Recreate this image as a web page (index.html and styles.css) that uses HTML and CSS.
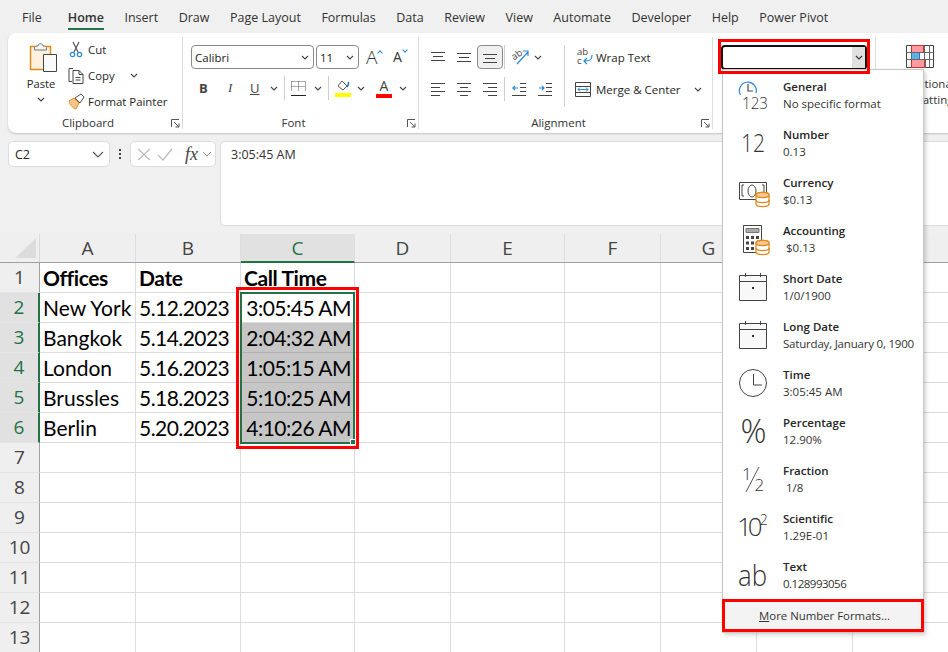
FILE: index.html
```html
<!DOCTYPE html>
<html lang="en">
<head>
<meta charset="utf-8">
<title>Excel number format menu</title>
<link rel="stylesheet" href="styles.css">
</head>
<body>
<div class="app">
  <nav class="tabs">
    <span>File</span><span class="tab-on">Home</span><span>Insert</span><span>Draw</span><span>Page Layout</span><span>Formulas</span><span>Data</span><span>Review</span><span>View</span><span>Automate</span><span>Developer</span><span>Help</span><span>Power Pivot</span>
  </nav>

  <section class="ribbon">
    <div class="group g-clip">
      <div class="group-body clip-body">
        <div class="paste">
          <svg width="34" height="31" viewBox="0 0 34 31"><path d="M6.500 4.500h20v23h-20z" fill="#fdf0dc" stroke="#e08a1e" stroke-width="1.500"/><path d="M10.500 8V5.500c0-1 2-1.500 3.500-1.500 0-3 5-3 5 0 1.500 0 3.500.5 3.500 1.500V8z" fill="#f4f4f4" stroke="#777"/><path d="M19.500 12.500h13v17h-13z" fill="#fafafa" stroke="#444"/></svg>
          <span class="paste-label">Paste</span>
          <svg class="chev" width="8" height="5" viewBox="0 0 8 5"><path d="M1 1l3 3 3-3" fill="none" stroke="#444" stroke-width="1.100"/></svg>
        </div>
        <div class="clip-list">
          <div class="clip-row"><svg width="16" height="17" viewBox="0 0 16 17"><path d="M5 1l5 10M11 1L6 11" stroke="#555" stroke-width="1.200" fill="none"/><circle cx="4.500" cy="13.500" r="2.200" fill="none" stroke="#2b88d8" stroke-width="1.200"/><circle cx="11.500" cy="13.500" r="2.200" fill="none" stroke="#2b88d8" stroke-width="1.200"/></svg><span>Cut</span></div>
          <div class="clip-row"><svg width="16" height="17" viewBox="0 0 16 17"><path d="M5 1.500H1v13h3M5 3.500h6l4 4v9H5z M11 3.500v4h4" fill="#fff" stroke="#444"/><path d="M7.500 10.500h5M7.500 13h5" stroke="#444"/></svg><span>Copy</span><svg class="clip-chev" width="8" height="5" viewBox="0 0 8 5"><path d="M1 1l3 3 3-3" fill="none" stroke="#444" stroke-width="1.100"/></svg></div>
          <div class="clip-row"><svg width="16" height="17" viewBox="0 0 16 17"><path d="M1 8l5-3 5 5-3 6c-2 0-6-4-7-8z" fill="#f7c48a" stroke="#e08a1e"/><path d="M7 5l6-4 3 3-4 6z" fill="#fff" stroke="#555"/></svg><span>Format Painter</span></div>
        </div>
      </div>
      <div class="group-foot"><span>Clipboard</span><svg class="launch" width="9" height="9" viewBox="0 0 9 9"><path d="M.5 8V.5H8M3 3l5 5M8 4.500V8H4.500" fill="none" stroke="#555"/></svg></div>
    </div>

    <div class="group g-font">
      <div class="group-body font-body">
        <div class="row font-top">
          <div class="combo font-name"><span>Calibri</span><svg width="8" height="5" viewBox="0 0 8 5"><path d="M1 1l3 3 3-3" fill="none" stroke="#444" stroke-width="1.100"/></svg></div>
          <div class="combo font-size"><span>11</span><svg width="8" height="5" viewBox="0 0 8 5"><path d="M1 1l3 3 3-3" fill="none" stroke="#444" stroke-width="1.100"/></svg></div>
          <span class="grow">A<i class="caret up"></i></span>
          <span class="grow small">A<i class="caret down"></i></span>
        </div>
        <div class="row font-bottom">
          <b class="fmt f-b">B</b><i class="fmt f-i">I</i><u class="fmt f-u">U</u>
          <svg width="8" height="5" viewBox="0 0 8 5"><path d="M1 1l3 3 3-3" fill="none" stroke="#444" stroke-width="1.100"/></svg>
          <span class="vsep vs-font"></span>
          <svg class="border-ico" width="15" height="15" viewBox="0 0 15 15"><path d="M.5.500h14M.5.500v10M14.500.500v10M.5 5.500h14M7.500.500v10" fill="none" stroke="#555" stroke-dasharray="1 1"/><path d="M0 14.500h15" stroke="#222"/></svg>
          <svg width="8" height="5" viewBox="0 0 8 5"><path d="M1 1l3 3 3-3" fill="none" stroke="#444" stroke-width="1.100"/></svg>
          <span class="vsep vs-font"></span>
          <svg class="fill-ico" width="16" height="17" viewBox="0 0 16 17"><path d="M7 1l5 5-4 4-5-4z" fill="#fff" stroke="#555"/><path d="M12 7c2-3 2-4 1-5" fill="none" stroke="#1b6ec2" stroke-width="1.500"/><path d="M0 13h16v4H0z" fill="#ffff00"/></svg>
          <svg width="8" height="5" viewBox="0 0 8 5"><path d="M1 1l3 3 3-3" fill="none" stroke="#444" stroke-width="1.100"/></svg>
          <span class="color-a">A</span>
          <svg width="8" height="5" viewBox="0 0 8 5"><path d="M1 1l3 3 3-3" fill="none" stroke="#444" stroke-width="1.100"/></svg>
        </div>
      </div>
      <div class="group-foot"><span>Font</span><svg class="launch" width="9" height="9" viewBox="0 0 9 9"><path d="M.5 8V.5H8M3 3l5 5M8 4.500V8H4.500" fill="none" stroke="#555"/></svg></div>
    </div>

    <div class="group g-align">
      <div class="group-body align-body">
        <div class="align-grid">
          <div class="row align-row">
            <span class="tile"><svg width="14" height="13" viewBox="0 0 14 13"><path d="M0 1.500h14M2 5.500h10M0 9.500h14" stroke="#444"/></svg></span>
            <span class="tile"><svg width="14" height="13" viewBox="0 0 14 13"><path d="M0 2.500h14M2 6.500h10M0 10.500h14" stroke="#444"/></svg></span>
            <span class="tile tile-on"><svg width="14" height="13" viewBox="0 0 14 13"><path d="M0 3.500h14M2 7.500h10M0 11.500h14" stroke="#444"/></svg></span>
            <span class="vsep vs-align"></span>
            <span class="orient"><svg width="18" height="17" viewBox="0 0 18 17"><text x="0" y="9" class="svg-ab" transform="rotate(-35 5 7)">ab</text><path d="M5 15L16 3M11 2h5v5" fill="none" stroke="#2b88d8" stroke-width="1.200"/></svg><svg width="8" height="5" viewBox="0 0 8 5"><path d="M1 1l3 3 3-3" fill="none" stroke="#444" stroke-width="1.100"/></svg></span>
          </div>
          <div class="row align-row">
            <span class="tile"><svg width="14" height="13" viewBox="0 0 14 13"><path d="M0 .5h14M0 4.500h9M0 8.500h14M0 12.500h9" stroke="#444"/></svg></span>
            <span class="tile"><svg width="14" height="13" viewBox="0 0 14 13"><path d="M0 .5h14M3 4.500h8M0 8.500h14M3 12.500h8" stroke="#444"/></svg></span>
            <span class="tile"><svg width="14" height="13" viewBox="0 0 14 13"><path d="M0 .5h14M5 4.500h9M0 8.500h14M5 12.500h9" stroke="#444"/></svg></span>
            <span class="vsep vs-align"></span>
            <span class="tile"><svg width="14" height="13" viewBox="0 0 14 13"><path d="M8 .5h6M8 4.500h6M8 8.500h6M0 12.500h14" stroke="#444"/><path d="M6 5H1M3 3L1 5l2 2" stroke="#2b88d8" fill="none" stroke-width="1.200"/></svg></span>
            <span class="tile"><svg width="14" height="13" viewBox="0 0 14 13"><path d="M8 .5h6M8 4.500h6M8 8.500h6M0 12.500h14" stroke="#444"/><path d="M1 5h5M4 3l2 2-2 2" stroke="#2b88d8" fill="none" stroke-width="1.200"/></svg></span>
          </div>
        </div>
        <span class="vsep vs-align-tall"></span>
        <div class="wrap-col">
          <div class="row wrap-row wrap-first"><svg width="16" height="16" viewBox="0 0 16 16"><text x="0" y="6" class="svg-ab">ab</text><text x="0" y="15" class="svg-ab">c</text><path d="M15 6c0 5-2 6-8 6M10 9l-3 3 3 3" fill="none" stroke="#2b88d8" stroke-width="1.200"/></svg><span>Wrap Text</span></div>
          <div class="row wrap-row wrap-second"><svg width="16" height="15" viewBox="0 0 16 15"><path d="M.5.500h15v14H.5zM.5 4.500h15M.5 10.500h15" fill="#fff" stroke="#444"/><path d="M3 7.500h10M5 5.500l-2 2 2 2M11 5.500l2 2-2 2" fill="none" stroke="#2b88d8"/></svg><span>Merge &amp; Center</span><svg class="merge-chev" width="8" height="5" viewBox="0 0 8 5"><path d="M1 1l3 3 3-3" fill="none" stroke="#444" stroke-width="1.100"/></svg></div>
        </div>
      </div>
      <div class="group-foot"><span>Alignment</span><svg class="launch" width="9" height="9" viewBox="0 0 9 9"><path d="M.5 8V.5H8M3 3l5 5M8 4.500V8H4.500" fill="none" stroke="#555"/></svg></div>
    </div>

    <div class="group g-num">
      <div class="num-combo"><span class="num-drop"><svg width="8" height="5" viewBox="0 0 8 5"><path d="M1 1l3 3 3-3" fill="none" stroke="#333" stroke-width="1.100"/></svg></span></div>
    </div>

    <div class="g-styles">
      <svg width="28" height="23" viewBox="0 0 28 23"><path d="M.5.500h27v22H.5z" fill="#fff" stroke="#444"/><path d="M5.500.500h12v7h-12z" fill="#ff9aa2" stroke="#c33"/><path d="M5.500 7.500h8v7h-8z" fill="#64aee8" stroke="#2b78c2"/><path d="M5.500 14.500h14v8h-14z" fill="#ff9aa2" stroke="#c33"/><path d="M.5 7.500h27M.5 14.500h27M18.500.500v22M23.500.500v22" fill="none" stroke="#666"/></svg>
      <span class="styles-label">Conditional<br>Formatting</span>
    </div>
  </section>

  <section class="formula">
    <div class="name-box"><span>C2</span><svg width="12" height="7" viewBox="0 0 12 7"><path d="M1 1l5 5 5-5" fill="none" stroke="#555" stroke-width="1.200"/></svg></div>
    <div class="dots"><i></i><i></i><i></i></div>
    <div class="fx-box">
      <svg width="14" height="13" viewBox="0 0 14 13"><path d="M1 1l12 11M13 1L1 12" stroke="#bbb" stroke-width="1.200"/></svg>
      <svg width="16" height="13" viewBox="0 0 16 13"><path d="M1 7l5 5 9-11" fill="none" stroke="#bbb" stroke-width="1.200"/></svg>
      <span class="fx">fx</span>
      <svg width="10" height="6" viewBox="0 0 10 6"><path d="M1 1l4 4 4-4" fill="none" stroke="#999"/></svg>
    </div>
    <div class="formula-input">3:05:45 AM</div>
  </section>

  <section class="sheet">
    <div class="sheet-row head-row">
      <div class="corner"><span class="corner-tri"></span></div>
      <div class="ch w-a">A</div><div class="ch w-b">B</div><div class="ch ch-on w-c">C</div><div class="ch w-a">D</div><div class="ch w-c">E</div><div class="ch w-a">F</div><div class="ch w-a">G</div><div class="ch w-a"></div><div class="ch w-a"></div>
    </div>
    <div class="sheet-row">
      <div class="rh">1</div><div class="cell w-a bold">Offices</div><div class="cell w-b bold">Date</div><div class="cell w-c bold">Call Time</div><div class="cell w-a"></div><div class="cell w-c"></div><div class="cell w-a"></div><div class="cell w-a"></div><div class="cell w-a"></div><div class="cell w-a"></div>
    </div>
    <div class="sheet-row">
      <div class="rh rh-on">2</div><div class="cell w-a">New York</div><div class="cell w-b date">5.12.2023</div><div class="cell w-c time">3:05:45 AM</div><div class="cell w-a"></div><div class="cell w-c"></div><div class="cell w-a"></div><div class="cell w-a"></div><div class="cell w-a"></div><div class="cell w-a"></div>
    </div>
    <div class="sheet-row">
      <div class="rh rh-on">3</div><div class="cell w-a">Bangkok</div><div class="cell w-b date">5.14.2023</div><div class="cell w-c time sel">2:04:32 AM</div><div class="cell w-a"></div><div class="cell w-c"></div><div class="cell w-a"></div><div class="cell w-a"></div><div class="cell w-a"></div><div class="cell w-a"></div>
    </div>
    <div class="sheet-row">
      <div class="rh rh-on">4</div><div class="cell w-a">London</div><div class="cell w-b date">5.16.2023</div><div class="cell w-c time sel">1:05:15 AM</div><div class="cell w-a"></div><div class="cell w-c"></div><div class="cell w-a"></div><div class="cell w-a"></div><div class="cell w-a"></div><div class="cell w-a"></div>
    </div>
    <div class="sheet-row">
      <div class="rh rh-on">5</div><div class="cell w-a">Brussles</div><div class="cell w-b date">5.18.2023</div><div class="cell w-c time sel">5:10:25 AM</div><div class="cell w-a"></div><div class="cell w-c"></div><div class="cell w-a"></div><div class="cell w-a"></div><div class="cell w-a"></div><div class="cell w-a"></div>
    </div>
    <div class="sheet-row">
      <div class="rh rh-on">6</div><div class="cell w-a">Berlin</div><div class="cell w-b date">5.20.2023</div><div class="cell w-c time sel">4:10:26 AM</div><div class="cell w-a"></div><div class="cell w-c"></div><div class="cell w-a"></div><div class="cell w-a"></div><div class="cell w-a"></div><div class="cell w-a"></div>
    </div>
    <div class="sheet-row"><div class="rh">7</div><div class="cell w-a"></div><div class="cell w-b"></div><div class="cell w-c"></div><div class="cell w-a"></div><div class="cell w-c"></div><div class="cell w-a"></div><div class="cell w-a"></div><div class="cell w-a"></div><div class="cell w-a"></div></div>
    <div class="sheet-row"><div class="rh">8</div><div class="cell w-a"></div><div class="cell w-b"></div><div class="cell w-c"></div><div class="cell w-a"></div><div class="cell w-c"></div><div class="cell w-a"></div><div class="cell w-a"></div><div class="cell w-a"></div><div class="cell w-a"></div></div>
    <div class="sheet-row"><div class="rh">9</div><div class="cell w-a"></div><div class="cell w-b"></div><div class="cell w-c"></div><div class="cell w-a"></div><div class="cell w-c"></div><div class="cell w-a"></div><div class="cell w-a"></div><div class="cell w-a"></div><div class="cell w-a"></div></div>
    <div class="sheet-row"><div class="rh">10</div><div class="cell w-a"></div><div class="cell w-b"></div><div class="cell w-c"></div><div class="cell w-a"></div><div class="cell w-c"></div><div class="cell w-a"></div><div class="cell w-a"></div><div class="cell w-a"></div><div class="cell w-a"></div></div>
    <div class="sheet-row"><div class="rh">11</div><div class="cell w-a"></div><div class="cell w-b"></div><div class="cell w-c"></div><div class="cell w-a"></div><div class="cell w-c"></div><div class="cell w-a"></div><div class="cell w-a"></div><div class="cell w-a"></div><div class="cell w-a"></div></div>
    <div class="sheet-row"><div class="rh">12</div><div class="cell w-a"></div><div class="cell w-b"></div><div class="cell w-c"></div><div class="cell w-a"></div><div class="cell w-c"></div><div class="cell w-a"></div><div class="cell w-a"></div><div class="cell w-a"></div><div class="cell w-a"></div></div>
    <div class="sheet-row"><div class="rh">13</div><div class="cell w-a"></div><div class="cell w-b"></div><div class="cell w-c"></div><div class="cell w-a"></div><div class="cell w-c"></div><div class="cell w-a"></div><div class="cell w-a"></div><div class="cell w-a"></div><div class="cell w-a"></div></div>
  </section>

  <div class="sel-green"><span class="handle"></span></div>
  <div class="mark mark-cells"></div>
  <div class="mark mark-combo"></div>

  <aside class="menu">
    <div class="item">
      <svg class="ico" width="32" height="32" viewBox="0 0 32 32"><path d="M3.500 16A8.500 8.500 0 1 1 19 14" fill="none" stroke="#2b88d8" stroke-width="1.200"/><path d="M11 5v7h5" fill="none" stroke="#444" stroke-width="1.200"/><text x="5" y="30" class="g g-17" textLength="26" lengthAdjust="spacingAndGlyphs">123</text></svg>
      <div class="txt"><strong>General</strong><span>No specific format</span></div>
    </div>
    <div class="item">
      <svg class="ico" width="32" height="32" viewBox="0 0 32 32"><text x="4" y="25" class="g g-26" textLength="24" lengthAdjust="spacingAndGlyphs">12</text></svg>
      <div class="txt"><strong>Number</strong><span>0.13</span></div>
    </div>
    <div class="item">
      <svg class="ico" width="32" height="32" viewBox="0 0 32 32"><path d="M2.500 7.500h27v17h-27z" fill="#fff" stroke="#444"/><path d="M7 10H5v11h2M25 10h2v11h-2" fill="none" stroke="#444"/><ellipse cx="15" cy="16" rx="4" ry="6" fill="none" stroke="#444"/><path d="M19 20c0-3.500 13-3.500 13 0v9c0 3.500-13 3.500-13 0z" fill="#fff" stroke="#e08a1e" stroke-width="1.300"/><path d="M19 20c0 3.500 13 3.500 13 0s-13-3.500-13 0z" fill="#f9c98c" stroke="#e08a1e" stroke-width="1.300"/><path d="M19 25c0 3.500 13 3.500 13 0" fill="none" stroke="#e08a1e" stroke-width="1.300"/></svg>
      <div class="txt"><strong>Currency</strong><span>$0.13</span></div>
    </div>
    <div class="item">
      <svg class="ico" width="32" height="32" viewBox="0 0 32 32"><path d="M6.500 2.500h18v27h-18z" fill="#fff" stroke="#444"/><path d="M9 5.500h13v4H9z" fill="#aaa" stroke="#777"/><path d="M9 13h3v3H9zM14 13h3v3h-3zM19 13h3v3h-3zM9 18.500h3v3H9zM14 18.500h3v3h-3zM9 24h3v3H9zM14 24h3v3h-3z" fill="#444"/><path d="M19 20c0-3.500 13-3.500 13 0v9c0 3.500-13 3.500-13 0z" fill="#fff" stroke="#e08a1e" stroke-width="1.300"/><path d="M19 20c0 3.500 13 3.500 13 0s-13-3.500-13 0z" fill="#f9c98c" stroke="#e08a1e" stroke-width="1.300"/><path d="M19 25c0 3.500 13 3.500 13 0" fill="none" stroke="#e08a1e" stroke-width="1.300"/></svg>
      <div class="txt"><strong>Accounting</strong><span class="ind">$0.13</span></div>
    </div>
    <div class="item">
      <svg class="ico" width="32" height="32" viewBox="0 0 32 32"><path d="M2.500 4.500h27v25h-27z" fill="#f8f8f8" stroke="#444"/><path d="M2.500 10.500h27M8.500 2v4M23.500 2v4" stroke="#444"/><path d="M15 16h2v2h-2z" fill="#333"/></svg>
      <div class="txt"><strong>Short Date</strong><span>1/0/1900</span></div>
    </div>
    <div class="item">
      <svg class="ico" width="32" height="32" viewBox="0 0 32 32"><path d="M2.500 4.500h27v25h-27z" fill="#f8f8f8" stroke="#444"/><path d="M2.500 10.500h27M8.500 2v4M23.500 2v4" stroke="#444"/><path d="M15 16h2v2h-2z" fill="#333"/></svg>
      <div class="txt"><strong>Long Date</strong><span class="tight-s">Saturday, January 0, 1900</span></div>
    </div>
    <div class="item">
      <svg class="ico" width="32" height="32" viewBox="0 0 32 32"><circle cx="16" cy="16" r="13.500" fill="#fff" stroke="#444"/><path d="M16.500 7v11H25" fill="none" stroke="#444"/></svg>
      <div class="txt"><strong>Time</strong><span>3:05:45 AM</span></div>
    </div>
    <div class="item">
      <svg class="ico" width="32" height="32" viewBox="0 0 32 32"><text x="3.500" y="28" class="g g-33" textLength="26" lengthAdjust="spacingAndGlyphs">%</text></svg>
      <div class="txt"><strong>Percentage</strong><span>12.90%</span></div>
    </div>
    <div class="item">
      <svg class="ico" width="32" height="32" viewBox="0 0 32 32"><text x="5" y="17" class="g g-17">1</text><path d="M9 29L22 4" stroke="#555"/><text x="17.500" y="28" class="g g-17">2</text></svg>
      <div class="txt"><strong>Fraction</strong><span class="ind">1/8</span></div>
    </div>
    <div class="item">
      <svg class="ico" width="32" height="32" viewBox="0 0 32 32"><text x="0" y="25" class="g g-26 sci">10<tspan class="g-14" dx="1" dy="-11">2</tspan></text></svg>
      <div class="txt"><strong>Scientific</strong><span>1.29E-01</span></div>
    </div>
    <div class="item">
      <svg class="ico" width="32" height="32" viewBox="0 0 32 32"><text x="1" y="27" class="g g-31" textLength="29" lengthAdjust="spacingAndGlyphs">ab</text></svg>
      <div class="txt"><strong>Text</strong><span class="tight">0.128993056</span></div>
    </div>
    <div class="more"><span><u>M</u>ore Number Formats...</span></div>
  </aside>
</div>
</body>
</html>
```
FILE: styles.css
```css
* { box-sizing: border-box; }
html, body { margin: 0; height: 100%; }
body { background: #f0f0f0; overflow: hidden; font-family: "Open Sans", "Noto Sans", sans-serif; font-size: 11.500px; color: #262626; }
.app { position: relative; width: 948px; height: 652px; overflow: hidden; }
svg { display: block; flex: none; overflow: visible; }

.tabs { height: 33px; display: flex; gap: 20.500px; padding: 9px 0 0 22px; font-size: 12.500px; line-height: 18px; color: #333; white-space: nowrap; }
.tab-on { font-weight: 600; height: 21px; margin-left: 5.500px; border-bottom: 2px solid #217346; }

.ribbon { margin-left: 8px; width: 960px; height: 100px; background: #fff; border-radius: 8px; box-shadow: 0 1px 2px rgba(0,0,0,.2); display: flex; padding-top: 4px; }
.group { display: flex; flex-direction: column; height: 92px; border-right: 1px solid #dcdcdc; position: relative; }
.group-body { height: 72px; }
.group-foot { height: 20px; display: flex; align-items: center; justify-content: center; font-size: 11.500px; position: relative; color: #333; padding: 6px 14px 0 0; }
.launch { position: absolute; right: 2px; top: 10px; }
.row { display: flex; align-items: center; }

.g-clip { width: 175px; }
.clip-body { display: flex; padding-left: 14px; }
.paste { width: 38px; padding-top: 5px; display: flex; flex-direction: column; align-items: center; }
.paste-label { margin-top: 3px; line-height: 16px; font-size: 11.200px; }
.paste .chev { margin-top: 5px; }
.clip-list { margin: -1px 0 0 8px; }
.clip-row { height: 26px; display: flex; align-items: center; gap: 4px; white-space: nowrap; font-size: 11.400px; }
.clip-chev { margin-left: 11px; }

.g-font { width: 236px; }
.font-body { padding: 8px 0 0 8px; }
.font-top { height: 24px; gap: 2px; }
.combo { height: 24px; border: 1px solid #8a8a8a; border-radius: 4px; display: flex; align-items: center; justify-content: space-between; padding: 0 4px 0 3px; background: #fff; color: #222; }
.font-name { width: 123px; }
.font-size { width: 43px; }
.grow { position: relative; width: 20px; margin-left: 5px; font-size: 19px; font-weight: 300; line-height: 20px; color: #333; }
.grow.small { font-size: 14px; font-weight: 400; }
.caret { position: absolute; left: 12px; top: 4px; width: 4px; height: 4px; border-left: 1px solid #2b88d8; border-top: 1px solid #2b88d8; transform: rotate(45deg); }
.caret.down { transform: rotate(225deg); top: 1px; left: 10px; }
.font-bottom { margin-top: 8px; height: 22px; padding-left: 8px; font-size: 13px; color: #444; }
.fmt { text-align: left; font-style: normal; }
.f-b { width: 28px; }
.f-i { width: 23px; padding-left: 1px; font-style: italic; font-family: "Liberation Serif", serif; }
.f-u { width: 20px; }
.vsep { display: block; background: #cfcfcf; width: 1px; flex: none; }
.vs-font { height: 24px; margin: 0 6px; }
.border-ico { margin-right: 8px; }
.fill-ico { margin-right: 6px; }
.color-a { width: 16px; height: 20px; margin: 0 7px 0 11px; text-align: center; font-size: 14px; line-height: 16px; border-bottom: 4px solid #f00; }

.g-align { width: 294px; }
.align-body { display: flex; padding: 8px 0 0 6px; }
.align-grid { width: 139px; }
.align-row { height: 24px; }
.align-row + .align-row { margin-top: 8px; }
.tile { width: 26px; height: 24px; display: flex; align-items: center; justify-content: center; }
.tile-on { background: #f0f0f0; border: 1px solid #8a8a8a; border-radius: 4px; }
.vs-align { height: 24px; margin: 0 1px 0 1px; }
.orient { display: flex; align-items: center; gap: 4px; margin-left: 6px; }
.svg-ab { font-size: 9.500px; fill: #444; font-family: "Open Sans", sans-serif; }
.vs-align-tall { height: 62px; margin-left: 0; }
.wrap-col { margin-left: 10px; }
.wrap-row { height: 24px; white-space: nowrap; }
.wrap-first { padding-left: 2px; gap: 3px; }
.wrap-second { gap: 5px; }
.wrap-row + .wrap-row { margin-top: 8px; }
.merge-chev { margin-left: 8px; }

.g-num { width: 163px; padding: 8px 0 0 8px; }
.num-combo { width: 146px; height: 25px; border: 2px solid #111; border-radius: 4px; background: #fff; display: flex; justify-content: flex-end; }
.num-drop { width: 13px; background: #e0e0e0; display: flex; align-items: center; justify-content: center; }
.g-styles { padding: 8px 0 0 30px; display: flex; flex-direction: column; font-size: 11.500px; }
.styles-label { margin: 8px 0 0 -22px; text-align: center; white-space: nowrap; line-height: 16px; width: 80px; color: #333; }

.formula { margin-top: 8px; height: 85px; padding-left: 8px; display: flex; align-items: flex-start; font-size: 12.500px; }
.name-box { width: 102px; height: 26px; background: #fff; border: 1px solid #ddd; border-radius: 5px; display: flex; align-items: center; justify-content: space-between; padding: 0 5px 0 6px; }
.dots { width: 20px; height: 26px; display: flex; flex-direction: column; align-items: center; justify-content: center; gap: 2px; }
.dots i { width: 2px; height: 2px; background: #444; }
.fx-box { width: 86px; height: 26px; background: #fff; border: 1px solid #ddd; border-radius: 5px; display: flex; align-items: center; gap: 6px; padding: 0 3px 0 6px; }
.fx { font-family: "Liberation Serif", serif; font-style: italic; font-size: 18px; color: #444; width: 15px; margin: 0 -2px 0 6px; }
.formula-input { margin-left: 4px; flex: 1; height: 85px; background: #fff; border: 1px solid #ddd; border-right: 0; border-radius: 5px 0 0 5px; padding: 4px 10px; line-height: 17px; color: #333; }

.sheet { margin-top: 8px; background: #fff; }
.sheet-row { display: flex; height: 30px; }
.head-row { height: 29px; background: #efefef; border-bottom: 1px solid #a0a0a0; }
.corner { width: 40px; position: relative; flex: none; border-right: 1px solid #d8d8d8; }
.corner-tri { position: absolute; left: 15px; top: 4px; width: 0; height: 0; border-left: 21px solid transparent; border-bottom: 20px solid #dcdcdc; }
.w-a { width: 96px; flex: none; }
.w-b { width: 105px; flex: none; }
.w-c { width: 114px; flex: none; }
.ch { font-size: 19px; line-height: 29px; text-align: center; color: #444; border-right: 1px solid #dedede; height: 28px; }
.ch-on { background: #e1e1e1; color: #217346; height: 29px; border-bottom: 2px solid #217346; }
.rh { width: 40px; flex: none; background: #efefef; font-size: 19px; line-height: 29px; text-align: center; color: #444; border-right: 1px solid #a0a0a0; border-bottom: 1px solid #e4e4e4; }
.rh-on { background: #e1e1e1; color: #217346; border-right: 2px solid #217346; }
.cell { font-family: Lato, "Liberation Sans", sans-serif; font-size: 21px; line-height: 29px; color: #000; padding-left: 3px; border-right: 1px solid #dcdcdc; border-bottom: 1px solid #dcdcdc; white-space: nowrap; overflow: hidden; }
.bold { font-weight: 700; letter-spacing: -.400px; }
.date { letter-spacing: -.550px; }
.time { text-align: right; padding: 0 3px 0 0; letter-spacing: -.500px; }
.sel { background: #c6c6c6; border-bottom-color: #b0b0b0; border-right-color: #b0b0b0; }

.sel-green { position: absolute; left: 240px; top: 292px; width: 115px; height: 152px; border: 2px solid #217346; }
.handle { position: absolute; right: -3px; bottom: -3px; width: 6px; height: 6px; background: #217346; border: 1px solid #fff; }
.mark { position: absolute; border: 3px solid #f00; }
.mark-cells { left: 236px; top: 287px; width: 123px; height: 162px; }
.mark-combo { left: 718px; top: 39px; width: 152px; height: 35px; z-index: 3; }

.menu { position: absolute; left: 722px; top: 69px; width: 202px; height: 564px; background: #fff; border: 1px solid #c6c6c6; box-shadow: 2px 2px 4px rgba(0,0,0,.18); padding-top: 1px; z-index: 2; }
.item { height: 48px; display: flex; align-items: center; padding-left: 14px; }
.txt { margin-left: 14px; display: flex; flex-direction: column; }
.txt strong { font-weight: 600; font-size: 11.500px; line-height: 17px; color: #262626; }
.txt span { font-size: 11.500px; line-height: 17px; color: #333; white-space: nowrap; }
.txt .ind { padding-left: 3px; }
.txt .tight { letter-spacing: -.500px; }
.txt .tight-s { letter-spacing: -.200px; }
.g { font-family: "Open Sans", sans-serif; font-weight: 300; fill: #333; }
.g-14 { font-size: 14px; }
.g-17 { font-size: 17px; }
.g-26 { font-size: 26px; }
.g-31 { font-size: 30px; }
.g-33 { font-size: 33px; }
.sci { letter-spacing: -4px; }
.sci .g-14 { letter-spacing: 0; }
.more { height: 33px; background: #f3f3f3; border: 3px solid #f00; padding-left: 3px; display: flex; align-items: center; justify-content: center; font-size: 11.400px; color: #333; position: relative; left: -1px; width: 202px; }
```
